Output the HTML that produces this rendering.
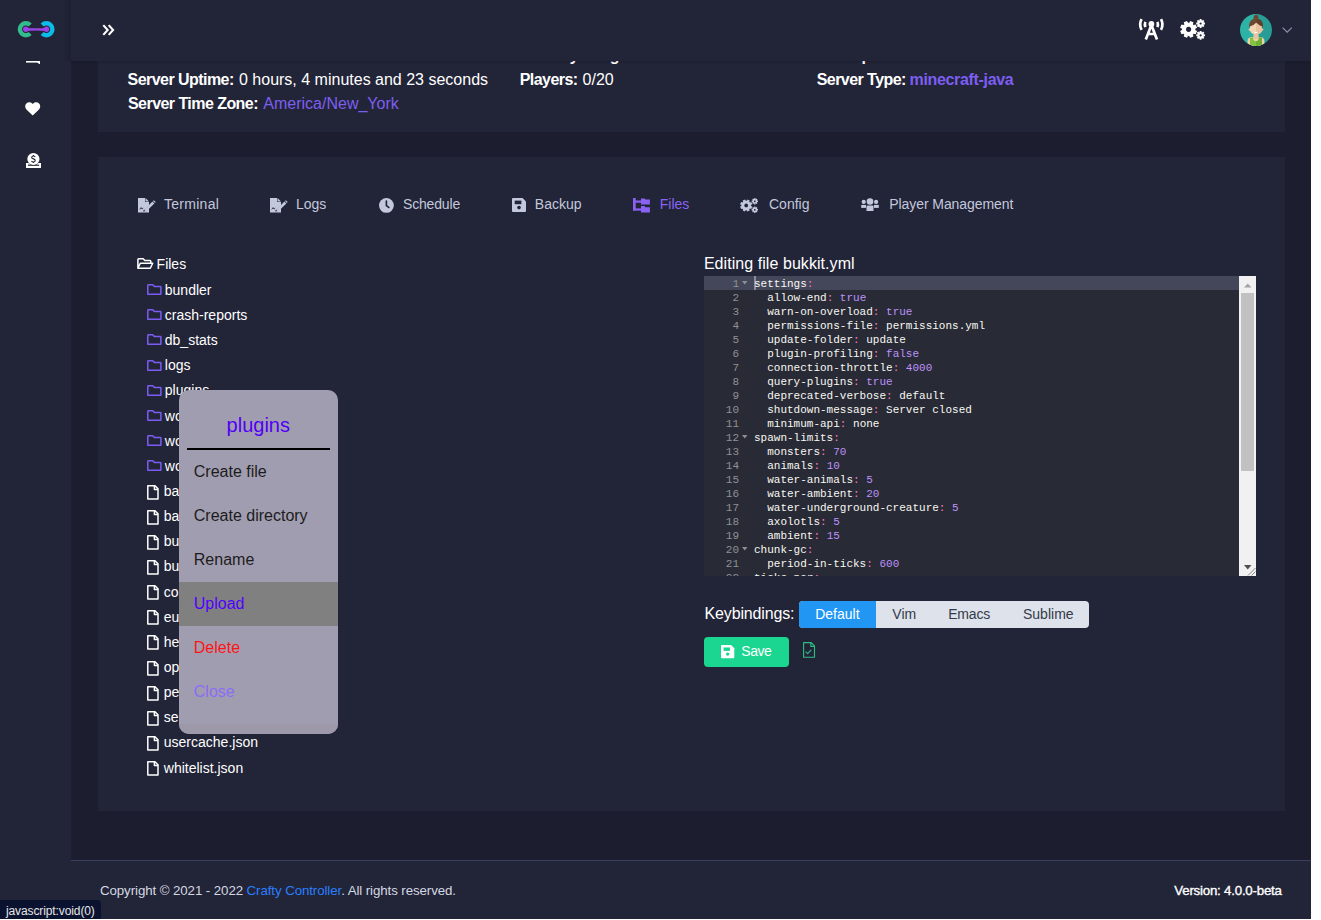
<!DOCTYPE html>
<html><head><meta charset="utf-8"><title>Crafty Controller</title>
<style>
html,body{margin:0;padding:0;background:#fff;width:1321px;height:920px;overflow:hidden;font-family:"Liberation Sans",sans-serif}
#app{position:absolute;left:0;top:0;width:1311px;height:919px;background:#1c1e2f;overflow:hidden}
.t{position:absolute;white-space:nowrap;line-height:1}
.r{position:absolute}
svg{position:absolute;overflow:visible}

</style></head><body><div id="app">
<div class="r" style="left:98px;top:0px;width:1187px;height:132px;background:#222437;"></div>
<div class="r" style="left:98px;top:157px;width:1187px;height:654px;background:#222437;"></div>
<div class="t" style="left:128px;top:48px;font-size:16px;color:#ffffff;font-weight:bold;letter-spacing:-0.55px;">Server Started: 05/27/2022 09:51:14</div>
<div class="t" style="left:520px;top:48px;font-size:16px;color:#ffffff;font-weight:bold;letter-spacing:-0.55px;">Memory Usage: 1.2GB</div>
<div class="t" style="left:816px;top:48px;font-size:16px;color:#ffffff;font-weight:bold;letter-spacing:-0.55px;">Description: False</div>
<div class="t" style="left:127.6px;top:72px;font-size:16px;color:#ffffff;font-weight:bold;letter-spacing:-0.55px;">Server Uptime:</div>
<div class="t" style="left:239px;top:72px;font-size:16px;color:#ffffff;">0 hours, 4 minutes and 23 seconds</div>
<div class="t" style="left:128px;top:96px;font-size:16px;color:#ffffff;font-weight:bold;letter-spacing:-0.55px;">Server Time Zone:</div>
<div class="t" style="left:263.3px;top:96px;font-size:16px;color:#7c5ff0;">America/New_York</div>
<div class="t" style="left:519.7px;top:72px;font-size:16px;color:#ffffff;font-weight:bold;letter-spacing:-0.55px;">Players:</div>
<div class="t" style="left:582.6px;top:72px;font-size:16px;color:#ffffff;">0/20</div>
<div class="t" style="left:816.7px;top:72px;font-size:16px;color:#ffffff;font-weight:bold;letter-spacing:-0.55px;">Server Type:</div>
<div class="t" style="left:909.5px;top:72px;font-size:16px;color:#7c5ff0;font-weight:bold;letter-spacing:-0.33px;">minecraft-java</div>
<div class="t" style="left:164px;top:197px;font-size:14px;color:#c3c8dd;letter-spacing:0.28px;">Terminal</div>
<div class="t" style="left:296px;top:197px;font-size:14px;color:#c3c8dd;">Logs</div>
<div class="t" style="left:403px;top:197px;font-size:14px;color:#c3c8dd;letter-spacing:-0.17px;">Schedule</div>
<div class="t" style="left:534.8px;top:197px;font-size:14px;color:#c3c8dd;">Backup</div>
<div class="t" style="left:659.8px;top:197px;font-size:14px;color:#8a63f5;">Files</div>
<div class="t" style="left:769px;top:197px;font-size:14px;color:#c3c8dd;">Config</div>
<div class="t" style="left:889.3px;top:197px;font-size:14px;color:#c3c8dd;letter-spacing:-0.08px;">Player Management</div>
<svg style="left:138px;top:197.5px;" width="18" height="16" viewBox="0 0 18 16"><path fill="#c3c8dd" d="M0 0h7v4h4v3.4L6.4 12.1H0z"/>
<path fill="#c3c8dd" d="M7.5 0L11 3.5H7.5z"/>
<path fill="#c3c8dd" d="M0 12.1h5.6l-0.3 1.3 2.8-0.4 2.9-2.9v4.3H0z"/>
<path fill="#c3c8dd" d="M7.1 10.9l7.3-7.3 1.9 1.9-7.3 7.3-2.5 0.6z"/>
<path fill="#c3c8dd" d="M15 3l0.8-0.8 1.9 1.9-0.8 0.8z"/>
<path fill="none" stroke="#222437" stroke-width="0.9" d="M1.8 11.3l1.3-1.7 1 1.5 1.1-1"/></svg>
<svg style="left:270px;top:197.5px;" width="18" height="16" viewBox="0 0 18 16"><path fill="#c3c8dd" d="M0 0h7v4h4v3.4L6.4 12.1H0z"/>
<path fill="#c3c8dd" d="M7.5 0L11 3.5H7.5z"/>
<path fill="#c3c8dd" d="M0 12.1h5.6l-0.3 1.3 2.8-0.4 2.9-2.9v4.3H0z"/>
<path fill="#c3c8dd" d="M7.1 10.9l7.3-7.3 1.9 1.9-7.3 7.3-2.5 0.6z"/>
<path fill="#c3c8dd" d="M15 3l0.8-0.8 1.9 1.9-0.8 0.8z"/>
<path fill="none" stroke="#222437" stroke-width="0.9" d="M1.8 11.3l1.3-1.7 1 1.5 1.1-1"/></svg>
<svg style="left:378.9px;top:197.6px;" width="15" height="15" viewBox="0 0 15 15"><circle cx="7.4" cy="7.4" r="7.4" fill="#c3c8dd"/><path d="M7.4 3v4.6l2.4 1.8" stroke="#222437" stroke-width="1.7" fill="none" stroke-linecap="round" stroke-linejoin="round"/></svg>
<svg style="left:512px;top:197.7px;" width="14" height="14" viewBox="0 0 14 14"><g transform="scale(1.0000)"><path fill="#c3c8dd" d="M1 0h9.6l3.4 3.4v9.6a1 1 0 0 1-1 1h-12a1 1 0 0 1-1-1v-12a1 1 0 0 1 1-1z"/><rect x="2.7" y="2.6" width="6.7" height="3.6" fill="#222437"/><circle cx="7" cy="9.6" r="1.8" fill="#222437"/></g></svg>
<svg style="left:633px;top:197.5px;" width="18" height="15" viewBox="0 0 18 15"><rect x="0" y="0" width="2.7" height="12.5" fill="#8a63f5"/>
<rect x="0" y="2.5" width="8" height="2.2" fill="#8a63f5"/><rect x="0" y="10.4" width="8" height="2.2" fill="#8a63f5"/>
<path fill="#8a63f5" d="M8 0.4h3.5l1 1.2h4.4v4.9H8z"/><path fill="#8a63f5" d="M8 8.1h3.5l1 1.2h4.4v5.2H8z"/></svg>
<svg style="left:740.3px;top:198.3px;" width="20" height="16" viewBox="0 0 20 16"><g transform="scale(0.72)"><path fill="#c3c8dd" fill-rule="evenodd" d="M15.00 12.38 L15.12 11.93 L15.21 11.48 L15.27 11.02 L17.06 11.96 L15.68 15.28 L13.76 14.68 L13.62 14.84 L13.48 14.99 L13.34 15.14 L11.73 16.33 L12.13 16.10 L12.51 15.84 L12.88 15.56 L13.48 17.48 L10.16 18.86 L9.22 17.07 L9.01 17.09 L8.81 17.10 L8.60 17.10 L6.62 16.80 L7.07 16.92 L7.52 17.01 L7.98 17.07 L7.04 18.86 L3.72 17.48 L4.32 15.56 L4.16 15.42 L4.01 15.28 L3.86 15.14 L2.67 13.53 L2.90 13.93 L3.16 14.31 L3.44 14.68 L1.52 15.28 L0.14 11.96 L1.93 11.02 L1.91 10.81 L1.90 10.61 L1.90 10.40 L2.20 8.42 L2.08 8.87 L1.99 9.32 L1.93 9.78 L0.14 8.84 L1.52 5.52 L3.44 6.12 L3.58 5.96 L3.72 5.81 L3.86 5.66 L5.47 4.47 L5.07 4.70 L4.69 4.96 L4.32 5.24 L3.72 3.32 L7.04 1.94 L7.98 3.73 L8.19 3.71 L8.39 3.70 L8.60 3.70 L10.58 4.00 L10.13 3.88 L9.68 3.79 L9.22 3.73 L10.16 1.94 L13.48 3.32 L12.88 5.24 L13.04 5.38 L13.19 5.52 L13.34 5.66 L14.53 7.27 L14.30 6.87 L14.04 6.49 L13.76 6.12 L15.68 5.52 L17.06 8.84 L15.27 9.78 L15.29 9.99 L15.30 10.19 L15.30 10.40Z M8.6 7.8a2.6 2.6 0 1 0 0.001 0z"/><path fill="#c3c8dd" fill-rule="evenodd" d="M23.99 4.19 L23.96 3.95 L23.91 3.72 L23.85 3.50 L25.01 3.61 L25.01 5.39 L23.85 5.50 L23.82 5.60 L23.78 5.70 L23.74 5.80 L23.22 6.67 L23.36 6.49 L23.49 6.29 L23.61 6.09 L24.35 6.99 L23.09 8.25 L22.19 7.51 L22.09 7.55 L22.00 7.60 L21.90 7.64 L20.91 7.89 L21.15 7.86 L21.38 7.81 L21.60 7.75 L21.49 8.91 L19.71 8.91 L19.60 7.75 L19.50 7.72 L19.40 7.68 L19.30 7.64 L18.43 7.12 L18.61 7.26 L18.81 7.39 L19.01 7.51 L18.11 8.25 L16.85 6.99 L17.59 6.09 L17.55 5.99 L17.50 5.90 L17.46 5.80 L17.21 4.81 L17.24 5.05 L17.29 5.28 L17.35 5.50 L16.19 5.39 L16.19 3.61 L17.35 3.50 L17.38 3.40 L17.42 3.30 L17.46 3.20 L17.98 2.33 L17.84 2.51 L17.71 2.71 L17.59 2.91 L16.85 2.01 L18.11 0.75 L19.01 1.49 L19.11 1.45 L19.20 1.40 L19.30 1.36 L20.29 1.11 L20.05 1.14 L19.82 1.19 L19.60 1.25 L19.71 0.09 L21.49 0.09 L21.60 1.25 L21.70 1.28 L21.80 1.32 L21.90 1.36 L22.77 1.88 L22.59 1.74 L22.39 1.61 L22.19 1.49 L23.09 0.75 L24.35 2.01 L23.61 2.91 L23.65 3.01 L23.70 3.10 L23.74 3.20Z M20.6 3.4a1.1 1.1 0 1 0 0.001 0z"/><path fill="#c3c8dd" fill-rule="evenodd" d="M23.99 15.99 L23.96 15.75 L23.91 15.52 L23.85 15.30 L25.01 15.41 L25.01 17.19 L23.85 17.30 L23.82 17.40 L23.78 17.50 L23.74 17.60 L23.22 18.47 L23.36 18.29 L23.49 18.09 L23.61 17.89 L24.35 18.79 L23.09 20.05 L22.19 19.31 L22.09 19.35 L22.00 19.40 L21.90 19.44 L20.91 19.69 L21.15 19.66 L21.38 19.61 L21.60 19.55 L21.49 20.71 L19.71 20.71 L19.60 19.55 L19.50 19.52 L19.40 19.48 L19.30 19.44 L18.43 18.92 L18.61 19.06 L18.81 19.19 L19.01 19.31 L18.11 20.05 L16.85 18.79 L17.59 17.89 L17.55 17.79 L17.50 17.70 L17.46 17.60 L17.21 16.61 L17.24 16.85 L17.29 17.08 L17.35 17.30 L16.19 17.19 L16.19 15.41 L17.35 15.30 L17.38 15.20 L17.42 15.10 L17.46 15.00 L17.98 14.13 L17.84 14.31 L17.71 14.51 L17.59 14.71 L16.85 13.81 L18.11 12.55 L19.01 13.29 L19.11 13.25 L19.20 13.20 L19.30 13.16 L20.29 12.91 L20.05 12.94 L19.82 12.99 L19.60 13.05 L19.71 11.89 L21.49 11.89 L21.60 13.05 L21.70 13.08 L21.80 13.12 L21.90 13.16 L22.77 13.68 L22.59 13.54 L22.39 13.41 L22.19 13.29 L23.09 12.55 L24.35 13.81 L23.61 14.71 L23.65 14.81 L23.70 14.90 L23.74 15.00Z M20.6 15.2a1.1 1.1 0 1 0 0.001 0z"/></g></svg>
<svg style="left:861px;top:198px;" width="19" height="14" viewBox="0 0 19 14"><circle cx="9" cy="3.5" r="3.3" fill="#c3c8dd"/><circle cx="2.7" cy="3.9" r="2.1" fill="#c3c8dd"/><circle cx="15.1" cy="3.9" r="2.1" fill="#c3c8dd"/>
<path fill="#c3c8dd" d="M0.2 6.9h4.8v3h-4.8z"/><path fill="#c3c8dd" d="M13 6.9h4.8v3h-4.8z"/>
<path fill="#c3c8dd" d="M5.5 8.6a1 1 0 0 1 1-1h5a1 1 0 0 1 1 1v4.3h-7z"/></svg>
<div class="t" style="left:156.6px;top:257px;font-size:14px;color:#ffffff;">Files</div>
<svg style="left:137px;top:257.9px;" width="17" height="12" viewBox="0 0 17 12"><path fill="none" stroke="#fff" stroke-width="1.5" stroke-linejoin="round" d="M0.9 10.3V1.6a0.8 0.8 0 0 1 .8-.8h4.5l1.6 1.7h5.2a.8.8 0 0 1 .8.8v2.4 M0.9 10.3l2.4-5.1h12.4l-2.4 5.1z"/></svg>
<div class="t" style="left:164.8px;top:283px;font-size:14px;color:#ffffff;">bundler</div>
<svg style="left:147px;top:284.2px;" width="15" height="11" viewBox="0 0 15 11"><path fill="none" stroke="#7d5cf5" stroke-width="1.5" stroke-linejoin="round" d="M0.8 10.2V1.4a.6.6 0 0 1 .6-.6h4.3l1.6 1.6h6a.6.6 0 0 1 .6.6v7.2z"/></svg>
<div class="t" style="left:164.8px;top:308px;font-size:14px;color:#ffffff;">crash-reports</div>
<svg style="left:147px;top:309.34px;" width="15" height="11" viewBox="0 0 15 11"><path fill="none" stroke="#7d5cf5" stroke-width="1.5" stroke-linejoin="round" d="M0.8 10.2V1.4a.6.6 0 0 1 .6-.6h4.3l1.6 1.6h6a.6.6 0 0 1 .6.6v7.2z"/></svg>
<div class="t" style="left:164.8px;top:333px;font-size:14px;color:#ffffff;">db_stats</div>
<svg style="left:147px;top:334.47999999999996px;" width="15" height="11" viewBox="0 0 15 11"><path fill="none" stroke="#7d5cf5" stroke-width="1.5" stroke-linejoin="round" d="M0.8 10.2V1.4a.6.6 0 0 1 .6-.6h4.3l1.6 1.6h6a.6.6 0 0 1 .6.6v7.2z"/></svg>
<div class="t" style="left:164.8px;top:358px;font-size:14px;color:#ffffff;">logs</div>
<svg style="left:147px;top:359.62px;" width="15" height="11" viewBox="0 0 15 11"><path fill="none" stroke="#7d5cf5" stroke-width="1.5" stroke-linejoin="round" d="M0.8 10.2V1.4a.6.6 0 0 1 .6-.6h4.3l1.6 1.6h6a.6.6 0 0 1 .6.6v7.2z"/></svg>
<div class="t" style="left:164.8px;top:383px;font-size:14px;color:#ffffff;">plugins</div>
<svg style="left:147px;top:384.76px;" width="15" height="11" viewBox="0 0 15 11"><path fill="none" stroke="#7d5cf5" stroke-width="1.5" stroke-linejoin="round" d="M0.8 10.2V1.4a.6.6 0 0 1 .6-.6h4.3l1.6 1.6h6a.6.6 0 0 1 .6.6v7.2z"/></svg>
<div class="t" style="left:164.8px;top:409px;font-size:14px;color:#ffffff;">world</div>
<svg style="left:147px;top:409.9px;" width="15" height="11" viewBox="0 0 15 11"><path fill="none" stroke="#7d5cf5" stroke-width="1.5" stroke-linejoin="round" d="M0.8 10.2V1.4a.6.6 0 0 1 .6-.6h4.3l1.6 1.6h6a.6.6 0 0 1 .6.6v7.2z"/></svg>
<div class="t" style="left:164.8px;top:434px;font-size:14px;color:#ffffff;">world_nether</div>
<svg style="left:147px;top:435.04px;" width="15" height="11" viewBox="0 0 15 11"><path fill="none" stroke="#7d5cf5" stroke-width="1.5" stroke-linejoin="round" d="M0.8 10.2V1.4a.6.6 0 0 1 .6-.6h4.3l1.6 1.6h6a.6.6 0 0 1 .6.6v7.2z"/></svg>
<div class="t" style="left:164.8px;top:459px;font-size:14px;color:#ffffff;">world_the_end</div>
<svg style="left:147px;top:460.18px;" width="15" height="11" viewBox="0 0 15 11"><path fill="none" stroke="#7d5cf5" stroke-width="1.5" stroke-linejoin="round" d="M0.8 10.2V1.4a.6.6 0 0 1 .6-.6h4.3l1.6 1.6h6a.6.6 0 0 1 .6.6v7.2z"/></svg>
<div class="t" style="left:163.8px;top:484px;font-size:14px;color:#ffffff;">banned-ips.json</div>
<svg style="left:147px;top:484.62px;" width="12" height="15" viewBox="0 0 12 15"><path fill="none" stroke="#fff" stroke-width="1.5" stroke-linejoin="round" d="M0.8 14.0V0.8h7.2l3 3v10.2z M7.4 0.8v3.6h3.6"/></svg>
<div class="t" style="left:163.8px;top:509px;font-size:14px;color:#ffffff;">banned-players.json</div>
<svg style="left:147px;top:509.76px;" width="12" height="15" viewBox="0 0 12 15"><path fill="none" stroke="#fff" stroke-width="1.5" stroke-linejoin="round" d="M0.8 14.0V0.8h7.2l3 3v10.2z M7.4 0.8v3.6h3.6"/></svg>
<div class="t" style="left:163.8px;top:534px;font-size:14px;color:#ffffff;">bukkit.yml</div>
<svg style="left:147px;top:534.9px;" width="12" height="15" viewBox="0 0 12 15"><path fill="none" stroke="#fff" stroke-width="1.5" stroke-linejoin="round" d="M0.8 14.0V0.8h7.2l3 3v10.2z M7.4 0.8v3.6h3.6"/></svg>
<div class="t" style="left:163.8px;top:559px;font-size:14px;color:#ffffff;">bukkit.yml.bak</div>
<svg style="left:147px;top:560.0400000000001px;" width="12" height="15" viewBox="0 0 12 15"><path fill="none" stroke="#fff" stroke-width="1.5" stroke-linejoin="round" d="M0.8 14.0V0.8h7.2l3 3v10.2z M7.4 0.8v3.6h3.6"/></svg>
<div class="t" style="left:163.8px;top:585px;font-size:14px;color:#ffffff;">commands.yml</div>
<svg style="left:147px;top:585.18px;" width="12" height="15" viewBox="0 0 12 15"><path fill="none" stroke="#fff" stroke-width="1.5" stroke-linejoin="round" d="M0.8 14.0V0.8h7.2l3 3v10.2z M7.4 0.8v3.6h3.6"/></svg>
<div class="t" style="left:163.8px;top:610px;font-size:14px;color:#ffffff;">eula.txt</div>
<svg style="left:147px;top:610.32px;" width="12" height="15" viewBox="0 0 12 15"><path fill="none" stroke="#fff" stroke-width="1.5" stroke-linejoin="round" d="M0.8 14.0V0.8h7.2l3 3v10.2z M7.4 0.8v3.6h3.6"/></svg>
<div class="t" style="left:163.8px;top:635px;font-size:14px;color:#ffffff;">help.yml</div>
<svg style="left:147px;top:635.46px;" width="12" height="15" viewBox="0 0 12 15"><path fill="none" stroke="#fff" stroke-width="1.5" stroke-linejoin="round" d="M0.8 14.0V0.8h7.2l3 3v10.2z M7.4 0.8v3.6h3.6"/></svg>
<div class="t" style="left:163.8px;top:660px;font-size:14px;color:#ffffff;">ops.json</div>
<svg style="left:147px;top:660.6px;" width="12" height="15" viewBox="0 0 12 15"><path fill="none" stroke="#fff" stroke-width="1.5" stroke-linejoin="round" d="M0.8 14.0V0.8h7.2l3 3v10.2z M7.4 0.8v3.6h3.6"/></svg>
<div class="t" style="left:163.8px;top:685px;font-size:14px;color:#ffffff;">permissions.yml</div>
<svg style="left:147px;top:685.74px;" width="12" height="15" viewBox="0 0 12 15"><path fill="none" stroke="#fff" stroke-width="1.5" stroke-linejoin="round" d="M0.8 14.0V0.8h7.2l3 3v10.2z M7.4 0.8v3.6h3.6"/></svg>
<div class="t" style="left:163.8px;top:710px;font-size:14px;color:#ffffff;">server.properties</div>
<svg style="left:147px;top:710.88px;" width="12" height="15" viewBox="0 0 12 15"><path fill="none" stroke="#fff" stroke-width="1.5" stroke-linejoin="round" d="M0.8 14.0V0.8h7.2l3 3v10.2z M7.4 0.8v3.6h3.6"/></svg>
<div class="t" style="left:163.8px;top:735px;font-size:14px;color:#ffffff;">usercache.json</div>
<svg style="left:147px;top:736.02px;" width="12" height="15" viewBox="0 0 12 15"><path fill="none" stroke="#fff" stroke-width="1.5" stroke-linejoin="round" d="M0.8 14.0V0.8h7.2l3 3v10.2z M7.4 0.8v3.6h3.6"/></svg>
<div class="t" style="left:163.8px;top:761px;font-size:14px;color:#ffffff;">whitelist.json</div>
<svg style="left:147px;top:761.16px;" width="12" height="15" viewBox="0 0 12 15"><path fill="none" stroke="#fff" stroke-width="1.5" stroke-linejoin="round" d="M0.8 14.0V0.8h7.2l3 3v10.2z M7.4 0.8v3.6h3.6"/></svg>
<div class="t" style="left:703.9px;top:256px;font-size:16px;color:#ffffff;letter-spacing:0.06px;">Editing file bukkit.yml</div>
<div class="r" style="left:704px;top:276px;width:535px;height:300px;background:#282a36;overflow:hidden"></div>
<div class="r" style="left:704px;top:276px;width:535px;height:14px;background:#44475a;"></div>
<div class="r" style="left:754px;top:276px;width:2px;height:14px;background:#8a8c98;"></div>
<div style="position:absolute;left:704px;top:276px;width:535px;height:300px;overflow:hidden;font-family:'Liberation Mono',monospace;font-size:11px;line-height:14px;"><div style="position:absolute;left:0;top:1px;width:35px;text-align:right;color:#909194"><div style="height:14px">1</div><div style="height:14px">2</div><div style="height:14px">3</div><div style="height:14px">4</div><div style="height:14px">5</div><div style="height:14px">6</div><div style="height:14px">7</div><div style="height:14px">8</div><div style="height:14px">9</div><div style="height:14px">10</div><div style="height:14px">11</div><div style="height:14px">12</div><div style="height:14px">13</div><div style="height:14px">14</div><div style="height:14px">15</div><div style="height:14px">16</div><div style="height:14px">17</div><div style="height:14px">18</div><div style="height:14px">19</div><div style="height:14px">20</div><div style="height:14px">21</div><div style="height:14px">22</div></div><div style="position:absolute;left:50px;top:1px;color:#f8f8f2;white-space:pre"><div style="height:14px">settings<span style="color:#ff79c6">:</span></div><div style="height:14px">  allow-end<span style="color:#ff79c6">:</span> <span style="color:#bd93f9">true</span></div><div style="height:14px">  warn-on-overload<span style="color:#ff79c6">:</span> <span style="color:#bd93f9">true</span></div><div style="height:14px">  permissions-file<span style="color:#ff79c6">:</span> permissions.yml</div><div style="height:14px">  update-folder<span style="color:#ff79c6">:</span> update</div><div style="height:14px">  plugin-profiling<span style="color:#ff79c6">:</span> <span style="color:#bd93f9">false</span></div><div style="height:14px">  connection-throttle<span style="color:#ff79c6">:</span> <span style="color:#bd93f9">4000</span></div><div style="height:14px">  query-plugins<span style="color:#ff79c6">:</span> <span style="color:#bd93f9">true</span></div><div style="height:14px">  deprecated-verbose<span style="color:#ff79c6">:</span> default</div><div style="height:14px">  shutdown-message<span style="color:#ff79c6">:</span> Server closed</div><div style="height:14px">  minimum-api<span style="color:#ff79c6">:</span> none</div><div style="height:14px">spawn-limits<span style="color:#ff79c6">:</span></div><div style="height:14px">  monsters<span style="color:#ff79c6">:</span> <span style="color:#bd93f9">70</span></div><div style="height:14px">  animals<span style="color:#ff79c6">:</span> <span style="color:#bd93f9">10</span></div><div style="height:14px">  water-animals<span style="color:#ff79c6">:</span> <span style="color:#bd93f9">5</span></div><div style="height:14px">  water-ambient<span style="color:#ff79c6">:</span> <span style="color:#bd93f9">20</span></div><div style="height:14px">  water-underground-creature<span style="color:#ff79c6">:</span> <span style="color:#bd93f9">5</span></div><div style="height:14px">  axolotls<span style="color:#ff79c6">:</span> <span style="color:#bd93f9">5</span></div><div style="height:14px">  ambient<span style="color:#ff79c6">:</span> <span style="color:#bd93f9">15</span></div><div style="height:14px">chunk-gc<span style="color:#ff79c6">:</span></div><div style="height:14px">  period-in-ticks<span style="color:#ff79c6">:</span> <span style="color:#bd93f9">600</span></div><div style="height:14px">ticks-per<span style="color:#ff79c6">:</span></div></div></div>
<svg style="left:742px;top:281px;" width="6" height="4" viewBox="0 0 6 4"><path d="M0 0h5.5l-2.75 3.5z" fill="#8f9096"/></svg>
<svg style="left:742px;top:435px;" width="6" height="4" viewBox="0 0 6 4"><path d="M0 0h5.5l-2.75 3.5z" fill="#8f9096"/></svg>
<svg style="left:742px;top:547px;" width="6" height="4" viewBox="0 0 6 4"><path d="M0 0h5.5l-2.75 3.5z" fill="#8f9096"/></svg>
<div class="r" style="left:1239px;top:276px;width:17px;height:300px;background:#f1f1f1;"></div>
<div class="r" style="left:1241px;top:293px;width:13px;height:178px;background:#c1c1c1;"></div>
<svg style="left:1243.5px;top:283px;" width="8" height="5" viewBox="0 0 8 5"><path d="M0 4.5h7.5l-3.75-4z" fill="#a3a3a3"/></svg>
<svg style="left:1243.5px;top:565px;" width="8" height="5" viewBox="0 0 8 5"><path d="M0 0h7.5l-3.75 4.5z" fill="#505050"/></svg>
<svg style="left:1247px;top:567px;" width="9" height="9" viewBox="0 0 9 9"><path d="M8.5 1L1 8.5M8.5 4.5L4.5 8.5" stroke="#6b6b6b" stroke-width="0.8"/></svg>
<div class="t" style="left:704.6px;top:606px;font-size:16px;color:#ffffff;letter-spacing:-0.15px;">Keybindings:</div>
<div class="r" style="left:799px;top:601px;width:290px;height:27px;background:#dee2ea;border-radius:4px"></div>
<div class="r" style="left:799px;top:601px;width:77px;height:27px;background:#2196f3;border-radius:4px 0 0 4px"></div>
<div class="t" style="left:815.2px;top:607px;font-size:14px;color:#ffffff;">Default</div>
<div class="t" style="left:892.3px;top:607px;font-size:14px;color:#343a4a;">Vim</div>
<div class="t" style="left:948.2px;top:607px;font-size:14px;color:#343a4a;letter-spacing:-0.18px;">Emacs</div>
<div class="t" style="left:1023px;top:607px;font-size:14px;color:#343a4a;">Sublime</div>
<div class="r" style="left:704px;top:637px;width:85px;height:30px;background:#1bd690;border-radius:4px"></div>
<svg style="left:720.7px;top:645px;" width="13.3" height="12" viewBox="0 0 13.3 12"><g transform="scale(0.9500)"><path fill="#ffffff" d="M1 0h9.6l3.4 3.4v9.6a1 1 0 0 1-1 1h-12a1 1 0 0 1-1-1v-12a1 1 0 0 1 1-1z"/><rect x="2.7" y="2.6" width="6.7" height="3.6" fill="#1bd690"/><circle cx="7" cy="9.6" r="1.8" fill="#1bd690"/></g></svg>
<div class="t" style="left:741.2px;top:644px;font-size:14px;color:#ffffff;letter-spacing:-0.4px;">Save</div>
<svg style="left:803px;top:642px;" width="13" height="16" viewBox="0 0 13 16"><path fill="none" stroke="#2dbd80" stroke-width="1.15" stroke-linejoin="round" d="M0.6 15.2V0.6h7.6l3.3 3.3v11.3z M7.8 0.6v3.7h3.7 M2.6 9.6l2 2 3.6-3.8"/></svg>
<div class="r" style="left:179px;top:390px;width:159px;height:344px;background:#a19db0;border-radius:10px;overflow:hidden"></div>
<div class="t" style="left:226.6px;top:415px;font-size:20px;color:#5200f5;letter-spacing:0.0px;">plugins</div>
<div class="r" style="left:187px;top:448px;width:143px;height:2px;background:#000;"></div>
<div class="r" style="left:179px;top:582px;width:159px;height:44px;background:#808080;"></div>
<div class="r" style="left:179px;top:724px;width:159px;height:10px;background:#9d99ab;border-radius:0 0 10px 10px"></div>
<div class="t" style="left:193.8px;top:464px;font-size:16px;color:#1c1c1c;">Create file</div>
<div class="t" style="left:193.8px;top:508px;font-size:16px;color:#1c1c1c;">Create directory</div>
<div class="t" style="left:193.8px;top:552px;font-size:16px;color:#1c1c1c;">Rename</div>
<div class="t" style="left:193.8px;top:596px;font-size:16px;color:#5200ff;">Upload</div>
<div class="t" style="left:193.8px;top:640px;font-size:16px;color:#ff1414;">Delete</div>
<div class="t" style="left:193.8px;top:684px;font-size:16px;color:#8a6cf5;">Close</div>
<div class="r" style="left:71px;top:860px;width:1240px;height:1px;background:#3b3f5f;"></div>
<div class="r" style="left:71px;top:861px;width:1240px;height:58px;background:#222437;"></div>
<div class="t" style="left:100px;top:884px;font-size:13.3px;letter-spacing:-0.09px;color:#d5d8e2">Copyright © 2021 - 2022 <span style="color:#2a7fff">Crafty Controller</span>. All rights reserved.</div>
<div class="t" style="left:1174.3px;top:884px;font-size:13.3px;color:#ffffff;letter-spacing:-0.22px;-webkit-text-stroke:0.35px #fff;">Version: 4.0.0-beta</div>
<div class="r" style="left:0px;top:0px;width:71px;height:919px;background:#222437;"></div>
<svg style="left:25px;top:58px;" width="16" height="7" viewBox="0 0 16 7"><path d="M1 3.8h13.2" stroke="#fff" stroke-width="1.6" fill="none"/><path d="M11.2 3.4l3 2.6v-2.6z" fill="#fff"/><rect x="14" y="3" width="1" height="3" fill="#fff"/></svg>
<svg style="left:25.4px;top:101.7px;" width="16" height="14" viewBox="0 0 16 14"><path fill="#fff" d="M7.7 13.6L1.4 7.4A3.9 3.9 0 0 1 7.2 1.5l0.5 0.5 0.5-0.5a3.9 3.9 0 0 1 5.8 5.9z"/></svg>
<svg style="left:25.6px;top:153px;" width="16" height="16" viewBox="0 0 16 16"><path d="M0 10h15v5H0z" fill="#fff"/><rect x="1.9" y="11.6" width="11.2" height="1.2" fill="#222437"/><circle cx="7.4" cy="6" r="6.4" fill="#222437"/><circle cx="7.4" cy="6" r="6.1" fill="#fff"/><path d="M9.2 3.9Q8.6 3 7.4 3Q5.7 3 5.7 4.4Q5.7 5.6 7.4 5.9Q9.2 6.3 9.2 7.6Q9.2 9 7.4 9Q6 9 5.5 8M7.4 2v1M7.4 9v1" fill="none" stroke="#222437" stroke-width="1.1"/></svg>
<div class="r" style="left:71px;top:0px;width:1240px;height:61px;background:#222437;box-shadow:0 1px 2px rgba(0,0,0,0.15)"></div>
<div class="r" style="left:64px;top:0px;width:3px;height:61px;background:rgba(0,0,0,0.035);"></div>
<div class="r" style="left:67px;top:0px;width:4px;height:61px;background:rgba(0,0,0,0.08);"></div>
<svg style="left:16px;top:19px;" width="40" height="20" viewBox="0 0 40 20"><path d="M14.14 6.06A6 6 0 1 0 14.14 14.54" fill="none" stroke="#33bd8c" stroke-width="4.4"/>
<path d="M26.16 6.06A6 6 0 1 1 26.16 14.54" fill="none" stroke="#0bbde8" stroke-width="4.4"/>
<circle cx="9.8" cy="10.3" r="2.7" fill="#9a44e8"/><circle cx="30.5" cy="10.3" r="2.7" fill="#9a44e8"/>
<path d="M9.8 8.7Q20.2 9.7 30.5 8.7V11.9Q20.2 10.9 9.8 11.9z" fill="#9a44e8"/></svg>
<svg style="left:102px;top:24px;" width="13" height="12" viewBox="0 0 13 12"><path d="M1.3 1.1l4.4 4.9-4.4 4.9M6.7 1.1l4.4 4.9-4.4 4.9" fill="none" stroke="#fff" stroke-width="2.1"/></svg>
<svg style="left:1138px;top:18px;" width="27" height="23" viewBox="0 0 27 23"><path d="M3.6 1.2Q0.6 6.5 3.6 11.8M23.0 1.2Q26.0 6.5 23.0 11.8" fill="none" stroke="#fff" stroke-width="2.7"/>
<path d="M7.3 3.9Q6.4 6.5 7.3 9.1M19.5 3.9Q20.4 6.5 19.5 9.1" fill="none" stroke="#fff" stroke-width="2.6"/>
<circle cx="13.4" cy="5.9" r="2.9" fill="#fff"/>
<path d="M13.4 7L7.8 21.6M13.4 7L19 21.6M10.2 16h6.4" fill="none" stroke="#fff" stroke-width="2.7"/></svg>
<svg style="left:1179.6px;top:18.6px;" width="27" height="22" viewBox="0 0 27 22"><g transform="scale(1.0)"><path fill="#ffffff" fill-rule="evenodd" d="M15.00 12.38 L15.12 11.93 L15.21 11.48 L15.27 11.02 L17.06 11.96 L15.68 15.28 L13.76 14.68 L13.62 14.84 L13.48 14.99 L13.34 15.14 L11.73 16.33 L12.13 16.10 L12.51 15.84 L12.88 15.56 L13.48 17.48 L10.16 18.86 L9.22 17.07 L9.01 17.09 L8.81 17.10 L8.60 17.10 L6.62 16.80 L7.07 16.92 L7.52 17.01 L7.98 17.07 L7.04 18.86 L3.72 17.48 L4.32 15.56 L4.16 15.42 L4.01 15.28 L3.86 15.14 L2.67 13.53 L2.90 13.93 L3.16 14.31 L3.44 14.68 L1.52 15.28 L0.14 11.96 L1.93 11.02 L1.91 10.81 L1.90 10.61 L1.90 10.40 L2.20 8.42 L2.08 8.87 L1.99 9.32 L1.93 9.78 L0.14 8.84 L1.52 5.52 L3.44 6.12 L3.58 5.96 L3.72 5.81 L3.86 5.66 L5.47 4.47 L5.07 4.70 L4.69 4.96 L4.32 5.24 L3.72 3.32 L7.04 1.94 L7.98 3.73 L8.19 3.71 L8.39 3.70 L8.60 3.70 L10.58 4.00 L10.13 3.88 L9.68 3.79 L9.22 3.73 L10.16 1.94 L13.48 3.32 L12.88 5.24 L13.04 5.38 L13.19 5.52 L13.34 5.66 L14.53 7.27 L14.30 6.87 L14.04 6.49 L13.76 6.12 L15.68 5.52 L17.06 8.84 L15.27 9.78 L15.29 9.99 L15.30 10.19 L15.30 10.40Z M8.6 7.8a2.6 2.6 0 1 0 0.001 0z"/><path fill="#ffffff" fill-rule="evenodd" d="M23.99 4.19 L23.96 3.95 L23.91 3.72 L23.85 3.50 L25.01 3.61 L25.01 5.39 L23.85 5.50 L23.82 5.60 L23.78 5.70 L23.74 5.80 L23.22 6.67 L23.36 6.49 L23.49 6.29 L23.61 6.09 L24.35 6.99 L23.09 8.25 L22.19 7.51 L22.09 7.55 L22.00 7.60 L21.90 7.64 L20.91 7.89 L21.15 7.86 L21.38 7.81 L21.60 7.75 L21.49 8.91 L19.71 8.91 L19.60 7.75 L19.50 7.72 L19.40 7.68 L19.30 7.64 L18.43 7.12 L18.61 7.26 L18.81 7.39 L19.01 7.51 L18.11 8.25 L16.85 6.99 L17.59 6.09 L17.55 5.99 L17.50 5.90 L17.46 5.80 L17.21 4.81 L17.24 5.05 L17.29 5.28 L17.35 5.50 L16.19 5.39 L16.19 3.61 L17.35 3.50 L17.38 3.40 L17.42 3.30 L17.46 3.20 L17.98 2.33 L17.84 2.51 L17.71 2.71 L17.59 2.91 L16.85 2.01 L18.11 0.75 L19.01 1.49 L19.11 1.45 L19.20 1.40 L19.30 1.36 L20.29 1.11 L20.05 1.14 L19.82 1.19 L19.60 1.25 L19.71 0.09 L21.49 0.09 L21.60 1.25 L21.70 1.28 L21.80 1.32 L21.90 1.36 L22.77 1.88 L22.59 1.74 L22.39 1.61 L22.19 1.49 L23.09 0.75 L24.35 2.01 L23.61 2.91 L23.65 3.01 L23.70 3.10 L23.74 3.20Z M20.6 3.4a1.1 1.1 0 1 0 0.001 0z"/><path fill="#ffffff" fill-rule="evenodd" d="M23.99 15.99 L23.96 15.75 L23.91 15.52 L23.85 15.30 L25.01 15.41 L25.01 17.19 L23.85 17.30 L23.82 17.40 L23.78 17.50 L23.74 17.60 L23.22 18.47 L23.36 18.29 L23.49 18.09 L23.61 17.89 L24.35 18.79 L23.09 20.05 L22.19 19.31 L22.09 19.35 L22.00 19.40 L21.90 19.44 L20.91 19.69 L21.15 19.66 L21.38 19.61 L21.60 19.55 L21.49 20.71 L19.71 20.71 L19.60 19.55 L19.50 19.52 L19.40 19.48 L19.30 19.44 L18.43 18.92 L18.61 19.06 L18.81 19.19 L19.01 19.31 L18.11 20.05 L16.85 18.79 L17.59 17.89 L17.55 17.79 L17.50 17.70 L17.46 17.60 L17.21 16.61 L17.24 16.85 L17.29 17.08 L17.35 17.30 L16.19 17.19 L16.19 15.41 L17.35 15.30 L17.38 15.20 L17.42 15.10 L17.46 15.00 L17.98 14.13 L17.84 14.31 L17.71 14.51 L17.59 14.71 L16.85 13.81 L18.11 12.55 L19.01 13.29 L19.11 13.25 L19.20 13.20 L19.30 13.16 L20.29 12.91 L20.05 12.94 L19.82 12.99 L19.60 13.05 L19.71 11.89 L21.49 11.89 L21.60 13.05 L21.70 13.08 L21.80 13.12 L21.90 13.16 L22.77 13.68 L22.59 13.54 L22.39 13.41 L22.19 13.29 L23.09 12.55 L24.35 13.81 L23.61 14.71 L23.65 14.81 L23.70 14.90 L23.74 15.00Z M20.6 15.2a1.1 1.1 0 1 0 0.001 0z"/></g></svg>
<svg style="left:1240px;top:14px;" width="32" height="32" viewBox="0 0 32 32"><defs><clipPath id="av"><circle cx="16" cy="16" r="16"/></clipPath></defs>
<g clip-path="url(#av)"><rect width="16" height="32" fill="#2cb3a6"/><rect x="16" width="16" height="32" fill="#289d95"/>
<path d="M7.6 32V26.5Q8 23.6 11 23.2h10Q24 23.6 24.4 26.5V32z" fill="#efd3ae"/>
<rect x="13.4" y="17" width="5.2" height="8" fill="#e9c3a2"/>
<path d="M10 32V23.6h3a3 3.6 0 0 0 6 0h3V32z" fill="#86c440"/><path d="M16 27.2a3 3.6 0 0 0 3-3.6h3V32h-6z" fill="#6db236"/>
<circle cx="10" cy="15.6" r="1.3" fill="#f0d2b0"/><circle cx="22" cy="15.6" r="1.3" fill="#e8c19f"/>
<path d="M10 12.5Q10 7.5 16 7.5Q22 7.5 22 12.5V16Q21.5 20.3 16 20.3Q10.5 20.3 10 16z" fill="#f2d5b4"/><path d="M16 7.5Q22 7.5 22 12.5V16Q21.5 20.3 16 20.3z" fill="#e9c29f"/>
<path d="M9 14.5Q8.3 4.4 16 4.4Q23.7 4.4 23 14.5L22.4 12.6Q19.5 11.6 16.4 8.4Q13.5 11.6 9.7 12.6z" fill="#6e4732"/>
<path d="M16 4.4Q23.7 4.4 23 14.5L22.4 12.6Q19.5 11.6 16.4 8.4z" fill="#62402d"/>
<ellipse cx="16" cy="3.4" rx="2.4" ry="2.6" fill="#6e4732"/>
<ellipse cx="16" cy="18.3" rx="1.7" ry="0.6" fill="#fff"/></g></svg>
<svg style="left:1282px;top:27px;" width="11" height="7" viewBox="0 0 11 7"><path d="M0.6 0.6l4.6 4.6 4.6-4.6" fill="none" stroke="#8d93a8" stroke-width="1.2"/></svg>
<div class="r" style="left:0px;top:900px;width:101px;height:19px;background:#0b1230;border-top-right-radius:4px"></div>
<div class="t" style="left:6px;top:905px;font-size:12px;color:#e6e6e6;letter-spacing:-0.11px;">javascript:void(0)</div>
</div></body></html>
